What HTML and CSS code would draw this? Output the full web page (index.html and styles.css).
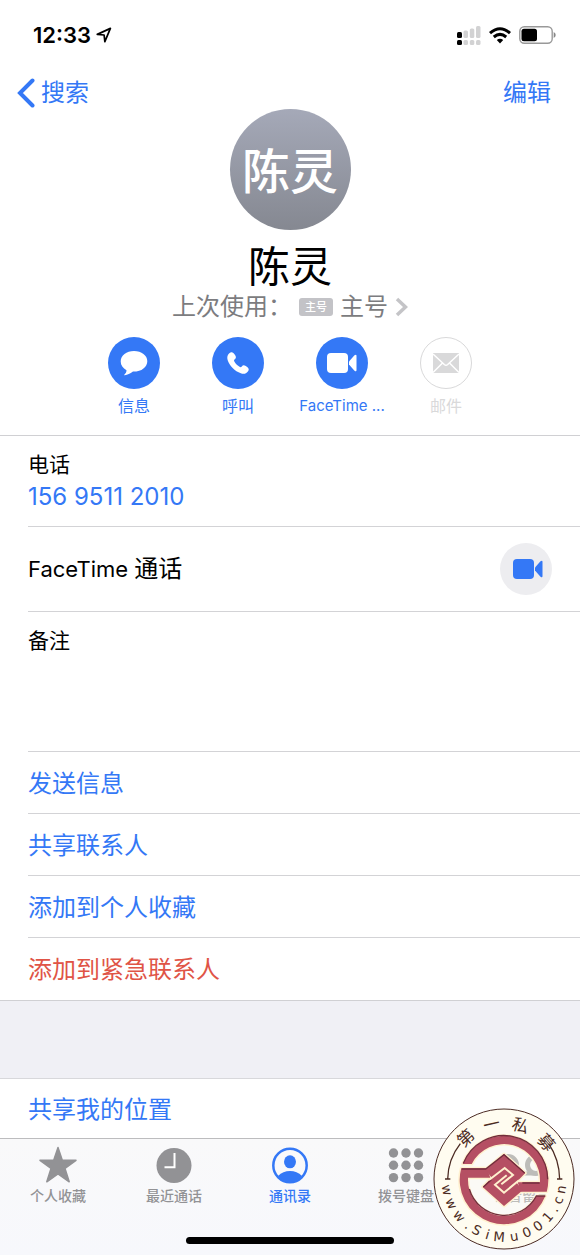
FILE: index.html
```html
<!DOCTYPE html>
<html lang="zh-CN">
<head>
<meta charset="utf-8">
<meta name="viewport" content="width=device-width, initial-scale=1">
<title>陈灵</title>
<link rel="stylesheet" href="styles.css">
</head>
<body>
<svg class="defs" aria-hidden="true">
  <symbol id="video" viewBox="0 0 30 20">
    <rect x="0" y="0" width="21" height="20" rx="4"/>
    <path d="M22 8.500 27.500 2.300Q29.500 1 29.500 3V17Q29.500 19 27.500 17.700L22 11.500Z"/>
  </symbol>
</svg>
<div class="screen">
  <header class="status">
    <div class="clock">12:33
      <svg width="16" height="16" viewBox="0 0 15 15" fill="none" stroke="#000" stroke-width="1.600" stroke-linejoin="round"><path d="M1.200 6.900 13.500 1.300 8.300 13.700 7.600 7.500Z"/></svg>
    </div>
    <div class="indicators">
      <svg width="24" height="19" viewBox="0 0 24 19">
        <g fill="#000"><rect x="0" y="6" width="5" height="6" rx="1.500"/><rect x="0" y="14" width="5" height="5" rx="1.500"/></g>
        <g fill="#d2d2d3"><rect x="6.500" y="4.500" width="4.500" height="7.500" rx="1.500"/><rect x="12.800" y="2.500" width="4.500" height="9.500" rx="1.500"/><rect x="19" y="0" width="4.500" height="12" rx="1.500"/><rect x="6.500" y="14" width="4.500" height="5" rx="1.500"/><rect x="12.800" y="14" width="4.500" height="5" rx="1.500"/><rect x="19" y="14" width="4.500" height="5" rx="1.500"/></g>
      </svg>
      <svg width="22" height="17" viewBox="0 0 22 17" fill="none" stroke="#000" stroke-width="3"><path d="M1 6.200Q11-2.800 21 6.200M4.800 10Q11 4.700 17.200 10"/><path d="M7.800 12.900Q11 10.600 14.200 12.900L11 16.500Z" fill="#000" stroke="none"/></svg>
      <svg width="37" height="18" viewBox="0 0 37 18"><rect x=".8" y=".8" width="32.400" height="16.400" rx="4.500" fill="none" stroke="#999" stroke-width="1.400"/><rect x="2.500" y="2.800" width="15.500" height="12.400" rx="2.500"/><path d="M34.700 6Q36.700 7 36.700 9T34.700 12Z" fill="#888"/></svg>
    </div>
  </header>
  <nav class="navbar">
    <button class="nav-button"><svg width="18" height="30" viewBox="0 0 18 30" fill="none" stroke="#3478f6" stroke-width="4" stroke-linecap="round" stroke-linejoin="miter"><path d="M15.500 2.500 3 15 15.500 27.500"/></svg>搜索</button>
    <button class="nav-button">编辑</button>
  </nav>
  <section class="profile">
    <div class="avatar">陈灵</div>
    <h1 class="name">陈灵</h1>
    <button class="last-used"><span>上次使用：</span><span class="sim">主号</span><span>主号</span>
      <svg width="13" height="20" viewBox="0 0 13 20" fill="none" stroke="#c4c4c7" stroke-width="3.500"><path d="M2 2 10.500 10 2 18"/></svg>
    </button>
    <div class="actions">
      <button class="action"><span class="disc"><svg width="28" height="26" viewBox="0 0 28 26" fill="#fff"><path d="M14 1C21.500 1 27.300 5.300 27.300 11.200S21.500 21.800 13 21.600C10 23.800 7.500 25 4.800 25.300 4 25.400 4 24.800 4.500 24.400 5.700 23.500 6.500 22.200 6.500 20.300 3 18.300 .7 15.200 .7 11.500 .7 5.500 6.500 1 14 1Z"/></svg></span>信息</button>
      <button class="action"><span class="disc"><svg width="24" height="24" viewBox="0 0 24 24" fill="#fff"><path d="M4.500 1.600C5.900 .6 7.500 1.500 9.200 4.300 10.300 6.200 10.100 7.200 8.800 8.200 7.900 9 7.800 9.500 8.500 10.700 9.700 12.700 11.200 14.300 13.200 15.600 14.500 16.400 15 16.300 15.800 15.400 16.900 14 18 13.900 19.800 15.100 22.600 17 23.300 18.200 22.400 19.700 20.800 22.300 18.300 23.600 14.800 22.300 8.900 20.100 3.400 14.600 1.700 9.200.6 5.800 2 3 4.500 1.600Z"/></svg></span>呼叫</button>
      <button class="action"><span class="disc"><svg width="30" height="20" fill="#fff"><use href="#video"/></svg></span><span class="latin">FaceTime ...</span></button>
      <button class="action disabled" disabled><span class="disc"><svg width="28" height="20" viewBox="0 0 28 20"><rect x="1" width="26" height="20" fill="#d9d9da"/><path d="M1 1 12.300 11.500Q14 13 15.700 11.500L27 1M1 19.500 10.500 10M27 19.500 17.500 10" fill="none" stroke="#fff" stroke-width="1.500"/></svg></span>邮件</button>
    </div>
  </section>
  <main class="list">
    <div class="row phone"><span class="label">电话</span><a class="number" href="tel:15695112010">156 9511 2010</a></div>
    <div class="row facetime"><span><span class="brand">FaceTime </span>通话</span><button class="round" aria-label="FaceTime 视频"><svg width="30" height="20" fill="#3478f6"><use href="#video"/></svg></button></div>
    <div class="row notes"><label class="label" for="notes">备注</label><textarea id="notes"></textarea></div>
    <button class="row link">发送信息</button>
    <button class="row link">共享联系人</button>
    <button class="row link">添加到个人收藏</button>
    <button class="row link danger">添加到紧急联系人</button>
  </main>
  <div class="gap"></div>
  <section class="share"><button class="row link">共享我的位置</button></section>
  <footer class="tabbar">
    <nav class="tabs">
      <button class="tab"><svg width="40" height="38" viewBox="0 0 40 38" fill="#929295" stroke="#929295" stroke-width="1.500" stroke-linejoin="round"><path d="M20 1.500 24.300 14.300H38L27 22.500 31.200 35.800 20 27.800 8.800 35.800 13 22.500 2 14.300H15.700Z"/></svg>个人收藏</button>
      <button class="tab"><svg width="36" height="38" viewBox="0 0 36 38"><circle cx="18" cy="19.500" r="17.500" fill="#929295"/><path d="M18.500 7V21.200H8.500" fill="none" stroke="#fff" stroke-width="2"/></svg>最近通话</button>
      <button class="tab current"><svg width="36" height="38" viewBox="0 0 36 38"><circle cx="18" cy="19.500" r="16.700" fill="none" stroke="#3478f6" stroke-width="2.500"/><ellipse cx="18" cy="15.800" rx="6" ry="6.500" fill="#3478f6"/><path d="M6 30Q11 25 18 25T30 30Q25 36 18 36T6 30Z" fill="#3478f6"/></svg>通讯录</button>
      <button class="tab"><svg width="36" height="38" viewBox="0 0 36 38" fill="#929295"><circle cx="5.500" cy="7" r="4.700"/><circle cx="18" cy="7" r="4.700"/><circle cx="30.500" cy="7" r="4.700"/><circle cx="5.500" cy="19.300" r="4.700"/><circle cx="18" cy="19.300" r="4.700"/><circle cx="30.500" cy="19.300" r="4.700"/><circle cx="5.500" cy="31.600" r="4.700"/><circle cx="18" cy="31.600" r="4.700"/><circle cx="30.500" cy="31.600" r="4.700"/></svg>拨号键盘</button>
      <button class="tab"><svg width="54" height="38" viewBox="0 0 54 38" fill="none" stroke="#929295" stroke-width="5"><circle cx="13" cy="19" r="8.500"/><circle cx="41" cy="19" r="8.500"/><path d="M13 27.500H41" stroke-width="4"/></svg>语音留言</button>
    </nav>
    <div class="home"></div>
  </footer>
  <svg class="seal" viewBox="0 0 426 426" role="img" aria-label="第一私募 www.SiMu001.cn">
    <defs>
      <path id="top-arc" d="M63 213A150 150 0 0 1 363 213"/>
      <path id="bottom-arc" d="M25 213A188 188 0 0 0 401 213"/>
      <path id="hook" d="M25 102A133 133 0 0 1 277.300 185H200L190 157H256.800A108 108 0 0 0 52.300 102Z"/>
      <path id="diamond" d="M149 72 213 129 186 157 205 181 149 228 85 171 112 143 93 119Z"/>
    </defs>
    <circle cx="213" cy="213" r="209" fill="#fffcf0" fill-opacity=".4"/>
    <path fill="#fffcf0" fill-rule="evenodd" d="M4 213A209 209 0 0 1 422 213 209 209 0 0 1 4 213ZM80 213A133 133 0 0 0 346 213 133 133 0 0 0 80 213Z"/>
    <circle cx="213" cy="213" r="210" fill="none" stroke="#4b2a22" stroke-width="3"/>
    <g transform="translate(64 66)">
      <g fill="#fff1cf" stroke="#fff1cf" stroke-width="9" stroke-linejoin="round"><use href="#hook"/><use href="#hook" transform="rotate(180 149 150)"/><use href="#diamond"/></g>
      <g fill="#b54f63"><use href="#hook"/><use href="#hook" transform="rotate(180 149 150)"/><use href="#diamond"/></g>
      <g fill="none" stroke="#722d3c" stroke-width="4">
        <path d="M27 100A131 131 0 0 1 280 148"/>
        <path d="M22 117H94L149 74 211 129"/>
        <path d="M204 159H256M87 171 111 149"/>
        <path d="M45 177A109 109 0 0 0 246 198H273"/>
      </g>
      <g fill="none" stroke="#fff1cf" stroke-width="6">
        <path d="M104 150 151 114 176 135 141 163"/>
        <path d="M194 151 149 188 122 164 157 136"/>
      </g>
    </g>
    <path d="M44 214Q45 154 82 107M380 214Q379 154 347 107M36 213H52M372 213H388" fill="none" stroke="#4b2a22" stroke-width="4"/>
    <text class="seal-title"><textPath href="#top-arc"><tspan x="123 202 280 364">第一私募</tspan></textPath></text>
    <text class="seal-url"><textPath href="#bottom-arc"><tspan x="36 82 130 171 203 241 279 328 371 413 456 489 520 556">www.SiMu001.cn</tspan></textPath></text>
  </svg>
</div>
</body>
</html>
```
FILE: styles.css
```css
* { box-sizing: border-box; }
body {
  margin: 0;
  background: #fff;
  color: #000;
  font-family: Inter, "Noto Sans CJK SC", sans-serif;
  font-size: 24px;
  line-height: 32px;
}
button {
  margin: 0;
  padding: 0;
  border: 0;
  background: none;
  color: inherit;
  font: inherit;
}
svg { display: block; flex: none; }
.defs { position: absolute; width: 0; height: 0; }
.screen {
  position: relative;
  display: flex;
  flex-direction: column;
  min-height: 100vh;
  overflow: hidden;
}
.status {
  display: flex;
  align-items: center;
  justify-content: space-between;
  height: 76px;
  padding: 0 24px 6px 33px;
}
.clock {
  display: flex;
  align-items: center;
  gap: 5px;
  font-size: 22px;
  font-weight: 600;
}
.indicators { display: flex; align-items: center; gap: 8px; }
.navbar {
  display: flex;
  align-items: center;
  justify-content: space-between;
  height: 33px;
  padding: 0 29px 0 17px;
  color: #3478f6;
}
.nav-button { display: flex; align-items: center; gap: 6px; }
.profile {
  display: flex;
  flex-direction: column;
  align-items: center;
  padding-bottom: 17px;
  border-bottom: 1px solid #d0d0d3;
}
.avatar {
  display: flex;
  align-items: center;
  justify-content: center;
  width: 121px;
  height: 121px;
  padding-top: 4px;
  border-radius: 50%;
  background: linear-gradient(#a5a9b8, #858891);
  color: #fff;
  font-size: 48px;
  font-weight: 500;
}
.name {
  margin: 13px 0 0;
  font-size: 42px;
  font-weight: 400;
  line-height: 48px;
}
.last-used {
  display: flex;
  align-items: center;
  gap: 7px;
  color: #7c7c80;
}
.sim {
  width: 34px;
  border-radius: 3px;
  background: #c3c3c7;
  color: #fff;
  font-size: 11px;
  font-weight: 500;
  line-height: 18px;
}
.actions {
  display: grid;
  grid-template-columns: repeat(4, 104px);
  margin-top: 14px;
}
.action {
  display: flex;
  flex-direction: column;
  align-items: center;
  gap: 5px;
  color: #3478f6;
  font-size: 16px;
  line-height: 24px;
  white-space: nowrap;
}
.latin { font-size: 15px; }
.disc {
  display: flex;
  align-items: center;
  justify-content: center;
  width: 52px;
  height: 52px;
  border-radius: 50%;
  background: #3478f6;
}
.disabled { color: #d9d9da; }
.disabled .disc { border: 1px solid #d9d9da; background: #fff; }
.list, .share { display: flex; flex-direction: column; padding-left: 28px; }
.row { border-bottom: 1px solid #d3d3d6; text-align: left; }
.label { font-size: 21px; }
.phone {
  display: flex;
  flex-direction: column;
  align-items: flex-start;
  height: 91px;
  padding-top: 13px;
}
.number { color: #3478f6; text-decoration: none; }
.facetime {
  display: flex;
  align-items: center;
  justify-content: space-between;
  height: 85px;
  padding-right: 28px;
}
.brand { font-size: 22px; }
.round {
  display: flex;
  align-items: center;
  justify-content: center;
  width: 52px;
  height: 52px;
  border-radius: 50%;
  background: #ededf0;
}
.round svg { margin-left: 3px; }
.notes {
  display: flex;
  flex-direction: column;
  height: 140px;
  padding-top: 13px;
}
.notes textarea {
  flex: 1;
  min-height: 0;
  padding: 0;
  border: 0;
  outline: 0;
  resize: none;
  background: none;
  font: inherit;
}
.link { min-height: 62px; padding-top: 2px; color: #3478f6; }
.danger { border-bottom: 0; color: #e05446; }
.list { border-bottom: 1px solid #d0d0d3; }
.gap {
  height: 78px;
  border-bottom: 1px solid #d8d8db;
  background: #f0f0f5;
}
.share .link { min-height: 59px; border-bottom: 0; }
.tabbar {
  display: flex;
  flex: 1;
  flex-direction: column;
  align-items: center;
  justify-content: space-between;
  padding: 7px 0 11px;
  border-top: 1px solid #bcbcbe;
  background: linear-gradient(#f9f9fa, #f7f8fc);
}
.tabs { display: grid; grid-template-columns: repeat(5, 1fr); width: 100%; }
.tab {
  display: flex;
  flex-direction: column;
  align-items: center;
  gap: 2px;
  color: #929295;
  font-size: 14px;
  font-weight: 500;
  line-height: 20px;
}
.current { color: #3478f6; }
.home { width: 208px; height: 7px; border-radius: 4px; background: #000; }
.seal {
  position: absolute;
  right: 5px;
  bottom: 5px;
  width: 142px;
  height: 142px;
}
.seal text { text-anchor: middle; }
.seal-title { fill: #4b2a22; font-size: 50px; }
.seal-url { fill: #4b2a22; font-family: "DejaVu Sans", sans-serif; font-size: 40px; }
```
